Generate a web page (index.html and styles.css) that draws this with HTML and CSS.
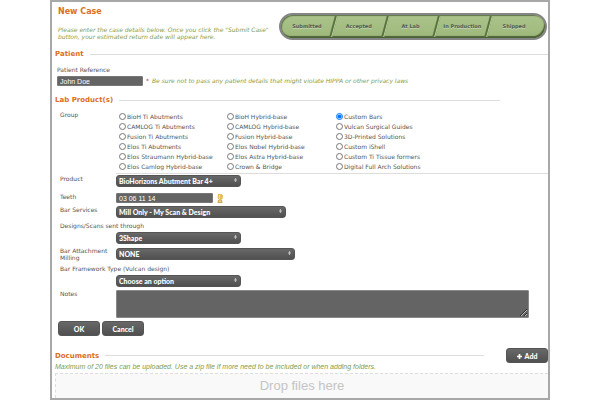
FILE: index.html
```html
<!DOCTYPE html>
<html lang="en">
<head>
<meta charset="utf-8">
<title>New Case</title>
<link rel="stylesheet" href="styles.css">
</head>
<body>
<main class="frame">
  <header class="top">
    <div class="intro">
      <h1>New Case</h1>
      <p class="hint">Please enter the case details below. Once you click the "Submit Case"<br>button, your estimated return date will appear here.</p>
    </div>
    <ol class="steps">
      <li>Submitted</li>
      <li>Accepted</li>
      <li>At Lab</li>
      <li>In Production</li>
      <li>Shipped</li>
    </ol>
  </header>

  <form>
    <h2 class="section">Patient</h2>
    <div class="patient">
      <label for="ref">Patient Reference</label>
      <div class="line">
        <input class="text ref" id="ref" type="text" value="John Doe">
        <span class="star">*</span>
        <span class="hint">Be sure not to pass any patient details that might violate HIPPA or other privacy laws</span>
      </div>
    </div>

    <h2 class="section lab">Lab Product(s)</h2>
    <div class="fields">
      <span class="name" id="group">Group</span>
      <div class="groups" role="radiogroup" aria-labelledby="group">
        <label><input type="radio" name="g">BioH Ti Abutments</label>
        <label><input type="radio" name="g">CAMLOG Ti Abutments</label>
        <label><input type="radio" name="g">Fusion Ti Abutments</label>
        <label><input type="radio" name="g">Elos Ti Abutments</label>
        <label><input type="radio" name="g">Elos Straumann Hybrid-base</label>
        <label><input type="radio" name="g">Elos Camlog Hybrid-base</label>
        <label><input type="radio" name="g">BioH Hybrid-base</label>
        <label><input type="radio" name="g">CAMLOG Hybrid-base</label>
        <label><input type="radio" name="g">Fusion Hybrid-base</label>
        <label><input type="radio" name="g">Elos Nobel Hybrid-base</label>
        <label><input type="radio" name="g">Elos Astra Hybrid-base</label>
        <label><input type="radio" name="g">Crown &amp; Bridge</label>
        <label><input type="radio" name="g" checked>Custom Bars</label>
        <label><input type="radio" name="g">Vulcan Surgical Guides</label>
        <label><input type="radio" name="g">3D-Printed Solutions</label>
        <label><input type="radio" name="g">Custom iShell</label>
        <label><input type="radio" name="g">Custom Ti Tissue formers</label>
        <label><input type="radio" name="g">Digital Full Arch Solutions</label>
      </div>

      <label class="name" for="product">Product</label>
      <div class="control ruled">
        <span class="pick"><select id="product"><option>BioHorizons Abutment Bar 4+</option></select><svg viewBox="0 0 4 6"><path d="M0 2.600L2 0l2 2.600zM0 3.400L2 6l2-2.600z"/></svg></span>
      </div>

      <label class="name" for="teeth">Teeth</label>
      <div class="control">
        <input class="text teeth" id="teeth" type="text" value="03 06 11 14">
        <svg class="tooth" viewBox="0 0 6 9"><path fill="#e3bd55" d="M1 0h3.500L6 1.500 5.500 5 4 6H2L.5 4z"/><path fill="#f3dfa2" d="M2 1h1v4H2z"/><path fill="#d2a94a" d="M1 6h4l.5 3h-5z"/><path fill="#f6ecd0" d="M2.200 6.500h1.400V8H2.200z"/></svg>
      </div>

      <label class="name" for="services">Bar Services</label>
      <div class="control">
        <span class="pick medium"><select id="services"><option>Mill Only - My Scan &amp; Design</option></select><svg viewBox="0 0 4 6"><path d="M0 2.600L2 0l2 2.600zM0 3.400L2 6l2-2.600z"/></svg></span>
      </div>

      <label class="name wide" for="through">Designs/Scans sent through</label>
      <div class="control">
        <span class="pick"><select id="through"><option>3Shape</option></select><svg viewBox="0 0 4 6"><path d="M0 2.600L2 0l2 2.600zM0 3.400L2 6l2-2.600z"/></svg></span>
      </div>

      <label class="name" for="milling">Bar Attachment Milling</label>
      <div class="control">
        <span class="pick long"><select id="milling"><option>NONE</option></select><svg viewBox="0 0 4 6"><path d="M0 2.600L2 0l2 2.600zM0 3.400L2 6l2-2.600z"/></svg></span>
      </div>

      <label class="name wide" for="framework">Bar Framework Type (Vulcan design)</label>
      <div class="control">
        <span class="pick"><select id="framework"><option>Choose an option</option></select><svg viewBox="0 0 4 6"><path d="M0 2.600L2 0l2 2.600zM0 3.400L2 6l2-2.600z"/></svg></span>
      </div>

      <label class="name" for="notes">Notes</label>
      <div class="control"><textarea id="notes"></textarea></div>
    </div>

    <div class="actions">
      <button type="submit">OK</button>
      <button type="button">Cancel</button>
    </div>
  </form>

  <section>
    <div class="docs">
      <h2 class="section">Documents</h2>
      <button type="button"><svg viewBox="0 0 6 6"><path d="M2 0h2v2h2v2H4v2H2V4H0V2h2z"/></svg>Add</button>
    </div>
    <p class="limit">Maximum of 20 files can be uploaded. Use a zip file if more need to be included or when adding folders.</p>
    <div class="drop">Drop files here</div>
  </section>
</main>
</body>
</html>
```
FILE: styles.css
```css
* {
  box-sizing: border-box;
}

body {
  margin: 0;
  padding: 0 50px;
  background: #fff;
  color: #555;
  font: 6px/8px "DejaVu Sans", Verdana, sans-serif;
}

.frame {
  border: 2px solid #a8a8a8;
}

h1,
h2,
p,
ol {
  margin: 0;
  padding: 0;
}

h1 {
  color: #dd6f22;
  font-size: 8px;
  line-height: 10px;
}

.hint {
  color: #7f9c4c;
  font-style: italic;
}

.top {
  display: flex;
  justify-content: space-between;
  height: 47px;
  padding: 5px 1px 0 6px;
}

.intro .hint {
  margin-top: 9px;
  line-height: 7px;
  white-space: nowrap;
}

/* Progress bar */
.steps {
  display: flex;
  width: 268px;
  height: 27px;
  margin-top: 6px;
  padding-right: 5px;
  overflow: hidden;
  border: 2px solid #858585;
  border-radius: 14px;
  background: linear-gradient(#abc38b, #9db87b);
  box-shadow: inset 1px 1px 1px #5e7548, inset -1px -2px 1px #4c6236;
  list-style: none;
}

.steps li {
  position: relative;
  flex: 1;
  color: #4d5a4e;
  font-size: 5px;
  font-weight: bold;
  line-height: 23px;
  text-align: center;
  text-shadow: 0 1px 0 #c9d8b4;
  white-space: nowrap;
}

.steps li + li::before {
  content: "";
  position: absolute;
  top: 1px;
  bottom: 1px;
  left: -1px;
  width: 2px;
  border-right: 1px solid #bdd19f;
  background: #58733f;
  transform: skewX(-15deg);
}

/* Section headings with a rule */
.section {
  display: flex;
  align-items: center;
  gap: 6px;
  padding-left: 3px;
  color: #dd6f22;
  font-size: 7px;
  line-height: 10px;
}

.section::after {
  content: "";
  flex: 1;
  height: 1px;
  background: #ddd;
}

.lab {
  margin: 9px 48px 0 0;
}

.patient {
  padding: 7px 0 0 5px;
}

.patient label {
  display: block;
}

.line {
  display: flex;
  align-items: center;
  gap: 3px;
  margin-top: 2px;
}

.star {
  color: #a33;
}

.text {
  height: 10px;
  padding: 0 2px;
  border: 1px solid #777;
  border-radius: 1px;
  background: #646464;
  color: #fff;
  font: 7px/8px "Liberation Sans", Arial, sans-serif;
}

.ref {
  width: 86px;
}

.teeth {
  width: 97px;
}

/* Product fields */
.fields {
  display: grid;
  grid-template-columns: 56px 1fr;
  row-gap: 3px;
  padding: 6px 0 0 8px;
}

.name {
  line-height: 7px;
}

.wide {
  grid-column: 1 / -1;
  padding-top: 1px;
}

.control {
  grid-column: 2;
  display: flex;
  align-items: center;
}

.ruled {
  margin-top: -2px;
  padding: 1px 0 3px;
  border-top: 1px solid #ddd;
}

.groups {
  display: grid;
  grid-template-rows: repeat(6, 10px);
  grid-template-columns: 108px 109px 1fr;
  grid-auto-flow: column;
  padding: 1px 0 0 3px;
}

.groups label {
  display: flex;
  align-items: center;
  gap: 1px;
}

.groups input {
  width: 7px;
  height: 7px;
  margin: 0 0 2px;
}

.pick {
  position: relative;
  width: 125px;
}

.medium {
  width: 170px;
}

.long {
  width: 179px;
}

.pick svg {
  position: absolute;
  top: 3px;
  right: 4px;
  width: 3px;
  height: 4px;
  fill: #ddd;
  pointer-events: none;
}

select,
button {
  border: 1px solid #555;
  border-radius: 3px;
  background: linear-gradient(#686868, #505050);
  color: #fff;
  font: 900 7px/10px Lato, "Open Sans", sans-serif;
}

select {
  display: block;
  width: 100%;
  height: 12px;
  padding: 0 2px;
  appearance: none;
}

.tooth {
  width: 6px;
  height: 9px;
  margin-left: 4px;
}

textarea {
  display: block;
  width: calc(100% - 19px);
  height: 28px;
  border: 1px solid #888;
  border-radius: 1px;
  background: #646464;
  color: #fff;
  resize: vertical;
}

.actions {
  display: flex;
  gap: 2px;
  padding: 3px 0 0 6px;
}

button {
  width: 42px;
  height: 15px;
  padding: 0;
}

.docs {
  display: flex;
  align-items: center;
  justify-content: space-between;
  gap: 22px;
  margin-top: 12px;
}

.docs .section {
  flex: 1;
}

.docs button svg {
  width: 5px;
  height: 5px;
  margin-right: 3px;
  fill: #fff;
}

.limit {
  padding-left: 3px;
  color: #7f9c4c;
  font: italic 7px/8px "Liberation Sans", Arial, sans-serif;
}

.drop {
  margin: 2px 0 0 3px;
  border: 1px dashed #ddd;
  border-width: 1px 0 0 1px;
  background: #f9f9f9;
  color: #c4c4c4;
  font: 13px/24px "Liberation Sans", Arial, sans-serif;
  text-align: center;
}
```
